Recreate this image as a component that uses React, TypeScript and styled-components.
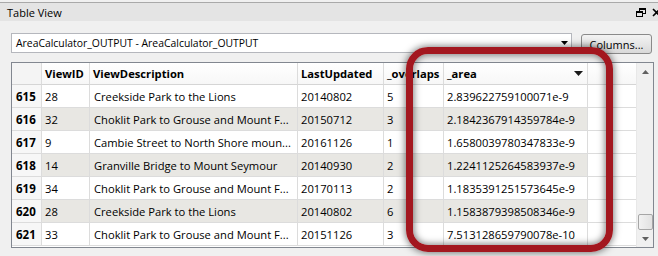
import React from "react";
import styled, { createGlobalStyle } from "styled-components";

const Global = createGlobalStyle`
  html, body { margin: 0; padding: 0; background: #f0f0f0; }
  body { font-family: "Open Sans", "Noto Sans", sans-serif; font-size: 11px; color: #000; }
`;

const Page = styled.div`
  position: relative;
  width: 658px;
  height: 256px;
  overflow: hidden;
  background: #f0f0f0;
  padding-top: 2px;
  box-sizing: border-box;
`;

const TitleBar = styled.div`
  height: 18px;
  border-top: 1px solid #a9a9a9;
  background: #e4e4e4;
  display: flex;
  align-items: center;
  padding-left: 7px;
  font-size: 11px;
`;

const TitleText = styled.span`
  flex: 1;
`;

const TitleIcons = styled.div`
  display: flex;
  align-items: center;
  gap: 6px;
  margin-right: -3px;
`;

const Body = styled.div`
  padding: 11px 5px 0 11px;
  display: flex;
  flex-direction: column;
  gap: 8px;
`;

const ComboRow = styled.div`
  display: flex;
  align-items: center;
  gap: 9px;
`;

const Combo = styled.div`
  width: 561px;
  height: 20px;
  box-sizing: border-box;
  border: 1px solid #b5b7bd;
  background: #fff;
  display: flex;
  align-items: center;
  padding-left: 4px;
  padding-right: 3px;
  font-size: 10.4px;
`;

const ComboText = styled.span`
  flex: 1;
`;

const ColumnsButton = styled.div`
  width: 71px;
  height: 20px;
  box-sizing: border-box;
  border: 1px solid #8a8a8a;
  border-radius: 3px;
  background: linear-gradient(#f3f3f3, #e6e6e6 50%, #d9d9d9);
  display: flex;
  align-items: center;
  justify-content: center;
  margin-top: 2px;
`;

const Frame = styled.div`
  width: 643px;
  height: 186px;
  box-sizing: border-box;
  border: 1px solid #828790;
  background: #fff;
  display: flex;
`;

const Grid = styled.div`
  flex: 1;
  display: grid;
  grid-template-columns: 30px 48px 208px 86px 60px 144px 1fr;
  grid-template-rows: 22px repeat(7, 23px);
  align-content: start;
`;

const HeadCell = styled.div<{ $corner?: boolean; $last?: boolean }>`
  box-sizing: border-box;
  border-right: ${(p) => (p.$last ? "none" : "1px solid #dcdcdc")};
  border-bottom: 1px solid #d5d5d5;
  background: ${(p) => (p.$corner ? "#f4f4f4" : "linear-gradient(#ffffff, #f7f7f7)")};
  font-weight: 700;
  font-size: 11.2px;
  display: flex;
  align-items: center;
  padding-left: 3px;
  padding-right: 4px;
  white-space: nowrap;
  overflow: hidden;
`;

const HeadLabel = styled.span`
  flex: 1;
`;

const RowHead = styled.div`
  box-sizing: border-box;
  border-right: 1px solid #dcdcdc;
  border-bottom: 1px solid #dcdcdc;
  background: #f7f7f7;
  font-weight: 700;
  font-size: 11.5px;
  display: flex;
  align-items: center;
  padding-left: 4px;
`;

const Cell = styled.div<{ $alt: boolean; $pad?: number; $last?: boolean }>`
  box-sizing: border-box;
  border-right: ${(p) => (p.$last ? "none" : "1px solid #dcdcdc")};
  border-bottom: 1px solid #dcdcdc;
  background: ${(p) => (p.$alt ? "#e8e7e3" : "#ffffff")};
  font-size: 11.2px;
  display: flex;
  align-items: center;
  padding-left: ${(p) => p.$pad ?? 3}px;
  white-space: nowrap;
  overflow: hidden;
`;

const Scrollbar = styled.div`
  width: 16px;
  display: flex;
  flex-direction: column;
  background: #f0f0f0;
  border-left: 1px solid #e8e8e8;
`;

const ScrollButton = styled.div`
  height: 17px;
  display: flex;
  align-items: center;
  justify-content: center;
`;

const Track = styled.div`
  flex: 1;
  display: flex;
  flex-direction: column;
  justify-content: flex-end;
  align-items: center;
`;

const Thumb = styled.div`
  width: 15px;
  height: 16px;
  box-sizing: border-box;
  border: 1px solid #a6a6a6;
  border-radius: 2px;
  background: linear-gradient(90deg, #f2f2f2, #e2e2e2);
`;

const Highlight = styled.div`
  position: absolute;
  left: 406px;
  top: 47px;
  width: 207px;
  height: 205px;
  box-sizing: border-box;
  border: 7px solid #a3171f;
  border-radius: 22px;
  box-shadow: 0 0 7px 1px rgba(0, 0, 0, 0.5), inset 0 0 7px 1px rgba(0, 0, 0, 0.5);
  pointer-events: none;
`;

const rows = [
  ["615", "28", "Creekside Park to the Lions", "20140802", "5", "2.839622759100071e-9"],
  ["616", "32", "Choklit Park to Grouse and Mount F...", "20150712", "3", "2.1842367914359784e-9"],
  ["617", "9", "Cambie Street to North Shore moun...", "20161126", "1", "1.6580039780347833e-9"],
  ["618", "14", "Granville Bridge to Mount Seymour", "20140930", "2", "1.2241125264583937e-9"],
  ["619", "34", "Choklit Park to Grouse and Mount F...", "20170113", "2", "1.1835391251573645e-9"],
  ["620", "28", "Creekside Park to the Lions", "20140802", "6", "1.1583879398508346e-9"],
  ["621", "33", "Choklit Park to Grouse and Mount F...", "20151126", "3", "7.513128659790078e-10"],
];

const Tri = ({ up, color, w = 7 }: { up?: boolean; color: string; w?: number }) => (
  <svg width={w} height={Math.ceil(w / 2)} viewBox={`0 0 ${w} ${Math.ceil(w / 2)}`}>
    {up ? (
      <polygon points={`0,${Math.ceil(w / 2)} ${w},${Math.ceil(w / 2)} ${w / 2},0`} fill={color} />
    ) : (
      <polygon points={`0,0 ${w},0 ${w / 2},${Math.ceil(w / 2)}`} fill={color} />
    )}
  </svg>
);

export default function App() {
  return (
    <>
      <Global />
      <Page>
        <TitleBar>
          <TitleText>Table View</TitleText>
          <TitleIcons>
            <svg width="10" height="9" viewBox="0 0 10 9">
              <rect x="3.5" y="0.5" width="6" height="5" fill="none" stroke="#000" />
              <rect x="3.5" y="0.5" width="6" height="1.5" fill="#000" />
              <rect x="0.5" y="3.5" width="6" height="5" fill="#e4e4e4" stroke="#000" />
              <rect x="0.5" y="3.5" width="6" height="1.5" fill="#000" />
            </svg>
            <svg width="9" height="9" viewBox="0 0 9 9">
              <path d="M1 1 L8 8 M8 1 L1 8" stroke="#000" strokeWidth="1.6" />
            </svg>
          </TitleIcons>
        </TitleBar>
        <Body>
          <ComboRow>
            <Combo>
              <ComboText>AreaCalculator_OUTPUT - AreaCalculator_OUTPUT</ComboText>
              <Tri color="#000" w={7} />
            </Combo>
            <ColumnsButton>Columns...</ColumnsButton>
          </ComboRow>
          <Frame>
            <Grid>
              <HeadCell $corner />
              <HeadCell>ViewID</HeadCell>
              <HeadCell>ViewDescription</HeadCell>
              <HeadCell>LastUpdated</HeadCell>
              <HeadCell>_overlaps</HeadCell>
              <HeadCell>
                <HeadLabel>_area</HeadLabel>
                <Tri color="#1a1a1a" w={9} />
              </HeadCell>
              <HeadCell $last />
              {rows.map((r, i) => {
                const alt = i % 2 === 1;
                return (
                  <React.Fragment key={r[0]}>
                    <RowHead>{r[0]}</RowHead>
                    <Cell $alt={alt}>{r[1]}</Cell>
                    <Cell $alt={alt} $pad={4}>{r[2]}</Cell>
                    <Cell $alt={alt}>{r[3]}</Cell>
                    <Cell $alt={alt}>{r[4]}</Cell>
                    <Cell $alt={alt}>{r[5]}</Cell>
                    <Cell $alt={false} $last />
                  </React.Fragment>
                );
              })}
            </Grid>
            <Scrollbar>
              <ScrollButton>
                <Tri up color="#606060" w={7} />
              </ScrollButton>
              <Track>
                <Thumb />
              </Track>
              <ScrollButton>
                <Tri color="#606060" w={7} />
              </ScrollButton>
            </Scrollbar>
          </Frame>
        </Body>
        <Highlight />
      </Page>
    </>
  );
}
